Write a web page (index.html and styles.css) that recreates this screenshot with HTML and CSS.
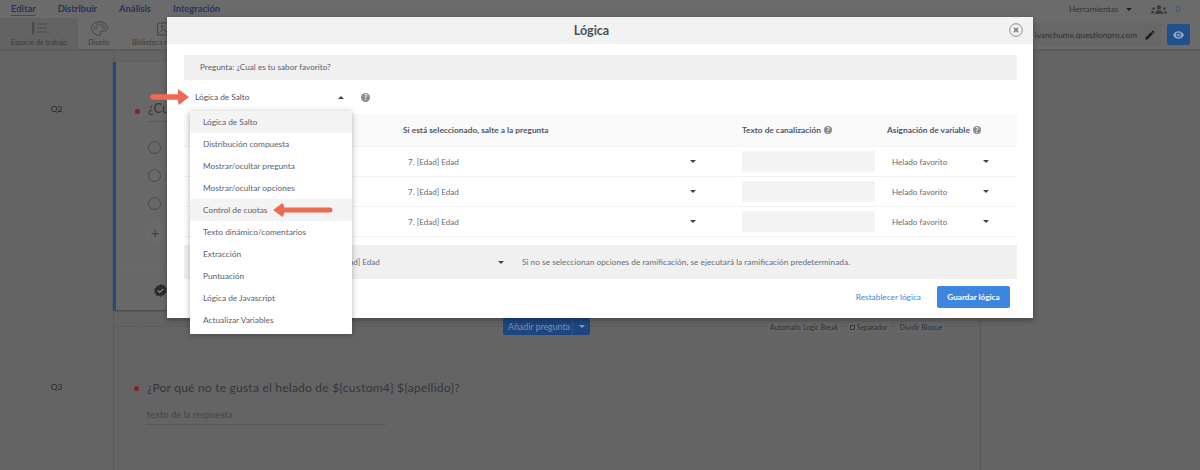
FILE: index.html
```html
<!DOCTYPE html>
<html lang="es">
<head>
<meta charset="utf-8">
<title>Lógica</title>
<link rel="stylesheet" href="styles.css">
</head>
<body>
<div class="page">
  <header class="nav">
    <a class="nav-link nav-active">Editar</a>
    <a class="nav-link">Distribuir</a>
    <a class="nav-link">Análisis</a>
    <a class="nav-link">Integración</a>
    <div class="nav-right">
      <span class="tools">Herramientas</span><span class="caret caret-dark"></span>
      <svg class="users" width="16" height="9" viewBox="0 0 16 9"><g fill="#3c3c3c"><circle cx="8" cy="2.400" r="2.200"/><path d="M4 9c0-2.600 1.600-3.800 4-3.800S12 6.400 12 9z"/><circle cx="2.600" cy="3.600" r="1.400"/><circle cx="13.400" cy="3.600" r="1.400"/><path d="M0 8.600c0-2 1-2.900 2.600-2.900L3.400 8.600zM16 8.600c0-2-1-2.900-2.600-2.900L12.600 8.600z"/></g></svg>
      <span class="count">0</span>
    </div>
  </header>
  <div class="toolbar">
    <div class="tool tool-active">
      <svg width="16" height="14" viewBox="0 0 16 14"><path d="M1 0h2.400v10L2.200 13.500 1 10z" fill="#4a4a4a"/><path d="M6 2h10M6 6h10M6 10h10" stroke="#4a4a4a" stroke-width="1"/></svg>
      <span>Espacio de trabajo</span>
    </div>
    <div class="tool tool-design">
      <svg width="17" height="15" viewBox="0 0 17 15"><path d="M8.500.7C4 .7.700 3.600.700 7.400c0 3.800 3.300 6.900 7.600 6.900 1.400 0 1.800-1 1.300-2-.6-1.200.2-2.200 1.500-2.200h2.300c1.900 0 2.900-1.200 2.900-2.900C16.300 3.300 12.800.7 8.500.7z" fill="none" stroke="#464646"/><circle cx="4.500" cy="7" r="1.200" fill="none" stroke="#464646" stroke-width=".7"/><circle cx="6.500" cy="3.800" r="1.200" fill="none" stroke="#464646" stroke-width=".7"/><circle cx="10.500" cy="3.800" r="1.200" fill="none" stroke="#464646" stroke-width=".7"/><circle cx="13" cy="6.500" r="1.200" fill="none" stroke="#464646" stroke-width=".7"/></svg>
      <span>Diseño</span>
    </div>
    <div class="tool tool-lib">
      <svg width="16" height="14" viewBox="0 0 16 14"><rect x=".5" y="1" width="15" height="12" fill="none" stroke="#464646"/><path d="M2 11l4-4 3 2.500 2-1.500 3 3" fill="none" stroke="#464646"/><circle cx="5" cy="4.500" r="1.200" fill="#464646"/></svg>
      <span>Biblioteca multimedia</span>
    </div>
    <div class="account">
      <span class="account-name">ivanchumx.questionpro.com</span>
      <svg width="12" height="12" viewBox="0 0 24 24"><path fill="#1c1c1c" d="M3 17.250V21h3.750L17.810 9.940l-3.750-3.750L3 17.250zM20.710 7.040a1 1 0 0 0 0-1.410l-2.340-2.340a1 1 0 0 0-1.410 0l-1.830 1.830 3.750 3.750 1.830-1.830z"/></svg>
    </div>
    <div class="eye-btn">
      <svg width="11" height="8" viewBox="0 0 24 16"><path fill="#8fa6c4" d="M12 0C6.500 0 2 3.300 0 8c2 4.700 6.500 8 12 8s10-3.300 12-8c-2-4.700-6.500-8-12-8zm0 13.300A5.300 5.300 0 1 1 12 2.700a5.300 5.300 0 0 1 0 10.600zM12 5a3 3 0 1 0 0 6 3 3 0 0 0 0-6z"/></svg>
    </div>
  </div>
  <main class="workspace">
    <section class="block block-q2">
      <div class="q-label">Q2</div>
      <div class="q-card q-card-active">
        <div class="q-title q-title-q2"><span class="star"></span><span class="q-text q-underlined">¿Cual es tu sabor favorito?</span></div>
        <div class="radios">
          <span class="radio"></span>
          <span class="radio"></span>
          <span class="radio"></span>
        </div>
        <div class="plus">+</div>
        <div class="card-foot">
          <svg class="badge" width="13" height="13" viewBox="0 0 12 12"><path d="M6 0l1.600 1.100 1.900-.1.700 1.800 1.600 1-.5 1.900.5 1.900-1.600 1-.7 1.800-1.900-.1L6 12l-1.600-1.100-1.900.1-.7-1.800-1.600-1 .5-1.900L.2 4.400l1.600-1 .7-1.800 1.900.1z" fill="#2b2b2b"/><path d="M3.500 6l1.800 1.800L8.700 4.500" fill="none" stroke="#8a8a8a" stroke-width="1.100"/></svg>
        </div>
      </div>
    </section>
    <div class="divider">
      <div class="add-btn"><span class="add-label">Añadir pregunta</span><span class="add-caret"><span class="caret caret-white"></span></span></div>
      <div class="divider-opts">
        <span class="opt">Automatic Logic Break</span>
        <span class="opt"><i class="check"></i> Separador</span>
        <span class="opt">Dividir Bloque</span>
      </div>
    </div>
    <section class="block block-q3">
      <div class="q-label">Q3</div>
      <div class="q-card">
        <div class="q-title"><span class="star"></span><span class="q-text">¿Por qué no te gusta el helado de ${custom4} ${apellido}?</span></div>
        <div class="answer">texto de la respuesta</div>
      </div>
    </section>
  </main>

  <div class="modal">
    <div class="modal-head">
      <span class="modal-title">Lógica</span>
      <svg class="close" width="14" height="14" viewBox="0 0 14 14"><circle cx="7" cy="7" r="6.300" fill="none" stroke="#8f8f8f"/><path d="M4.800 4.800l4.400 4.400M9.200 4.800L4.800 9.200" stroke="#777" stroke-width="1.400"/></svg>
    </div>
    <div class="modal-body">
      <div class="question-bar">Pregunta: ¿Cual es tu sabor favorito?</div>
      <div class="logic-row">
        <div class="logic-select"><span>Lógica de Salto</span><span class="caret caret-up"></span></div>
        <span class="help help-main">?</span>
      </div>
      <div class="logic-table">
        <div class="row row-head">
          <div></div>
          <div class="th">Si está seleccionado, salte a la pregunta</div>
          <div class="th">Texto de canalización <span class="help help-small">?</span></div>
          <div class="th">Asignación de variable <span class="help help-small">?</span></div>
        </div>
        <div class="row">
          <div></div>
          <div class="sel sel-wide"><span>7. [Edad] Edad</span><span class="caret"></span></div>
          <div class="cell-input"><div class="input"></div></div>
          <div class="sel sel-var"><span>Helado favorito</span><span class="caret"></span></div>
        </div>
        <div class="row">
          <div></div>
          <div class="sel sel-wide"><span>7. [Edad] Edad</span><span class="caret"></span></div>
          <div class="cell-input"><div class="input"></div></div>
          <div class="sel sel-var"><span>Helado favorito</span><span class="caret"></span></div>
        </div>
        <div class="row">
          <div></div>
          <div class="sel sel-wide"><span>7. [Edad] Edad</span><span class="caret"></span></div>
          <div class="cell-input"><div class="input"></div></div>
          <div class="sel sel-var"><span>Helado favorito</span><span class="caret"></span></div>
        </div>
      </div>
      <div class="default-bar">
        <div class="sel sel-default"><span>7. [Edad] Edad</span><span class="caret"></span></div>
        <span class="default-note">Si no se seleccionan opciones de ramificación, se ejecutará la ramificación predeterminada.</span>
      </div>
      <div class="modal-foot">
        <a class="reset">Restablecer lógica</a>
        <button class="save" type="button">Guardar lógica</button>
      </div>
    </div>
  </div>

  <ul class="menu">
    <li class="menu-item menu-hover">Lógica de Salto</li>
    <li class="menu-item">Distribución compuesta</li>
    <li class="menu-item">Mostrar/ocultar pregunta</li>
    <li class="menu-item">Mostrar/ocultar opciones</li>
    <li class="menu-item menu-hover">Control de cuotas</li>
    <li class="menu-item">Texto dinámico/comentarios</li>
    <li class="menu-item">Extracción</li>
    <li class="menu-item">Puntuación</li>
    <li class="menu-item">Lógica de Javascript</li>
    <li class="menu-item">Actualizar Variables</li>
  </ul>

  <svg class="arrow arrow-one" width="40" height="18" viewBox="0 0 40 18"><path d="M3 9h28" stroke="#ee6a55" stroke-width="5.500" stroke-linecap="round"/><path d="M28 1L39 9 29 17 28 14V4z" fill="#ee6a55"/></svg>
  <svg class="arrow arrow-two" width="62" height="18" viewBox="0 0 62 18"><path d="M58 9H12" stroke="#ee6a55" stroke-width="5" stroke-linecap="round"/><path d="M10.500 2L1 9l9.500 7 1.500-3V5z" fill="#ee6a55"/></svg>
</div>
</body>
</html>
```
FILE: styles.css
```css
* { box-sizing: border-box; }
html, body { margin: 0; padding: 0; }
body {
  width: 1200px;
  height: 470px;
  overflow: hidden;
  background: #646464;
  font-family: "Lato", "Noto Sans", "Liberation Sans", sans-serif;
  color: #545c6b;
}
.page { position: relative; width: 1200px; height: 470px; overflow: hidden; }

/* page behind the modal, dimmed */
.nav {
  display: flex;
  align-items: center;
  height: 18px;
  padding-left: 11px;
  gap: 22px;
  background: #6b6b6b;
}
.nav-link { font-size: 9.400px; font-weight: 700; color: #25355a; line-height: 12px; }
.nav-active { border-bottom: 1px solid #24528f; }
.nav-right { margin-left: auto; display: flex; align-items: center; padding-right: 20px; }
.tools { font-size: 8.300px; color: #333; }
.nav-right .caret-dark { margin: 0 19px 0 8px; }
.users { margin-right: 8px; }
.count { font-size: 8.300px; color: #24528f; }

.toolbar {
  display: flex;
  height: 33px;
  background: #6b6b6b;
  border-bottom: 2px solid #5c5c5c;
  padding-right: 10px;
}
.tool { display: flex; flex-direction: column; align-items: center; justify-content: center; gap: 2px; font-size: 7px; color: #3c3c3c; height: 31px; white-space: nowrap; }
.tool-active { width: 78px; background: #636363; }
.tool-design { width: 42px; }
.tool-lib { width: 90px; }
.account {
  margin-left: auto;
  display: flex;
  align-items: center;
  gap: 7px;
  height: 23px;
  margin-top: 5px;
  padding: 0 5px 0 0;
  background: #676767;
  font-size: 8.300px;
  color: #2f2f2f;
}
.eye-btn {
  display: flex; align-items: center; justify-content: center;
  width: 23px; height: 21px; margin: 6px 0 0 6px;
  background: #22508f; border-radius: 2px;
}

.workspace {
  width: 981px;
  height: 419px;
  border-right: 1px solid #5a5a5a;
  background: linear-gradient(#5a5a5a, #5a5a5a) 113px 0 / 1px 100% no-repeat;
}
.block { display: grid; grid-template-columns: 113px 867px; }
.q-label { font-size: 8.300px; color: #262626; text-align: center; }
.block-q2 { padding-top: 11px; }
.block-q2 .q-label { padding-top: 42px; }
.block-q2 .q-card { height: 248px; border-left: 3px solid #234a80; background: #686868; box-shadow: 0 1px 2px rgba(0, 0, 0, .3); }
.q-title { display: flex; align-items: center; padding-left: 21px; }
.q-title-q2 { padding: 38px 0 0 19px; }
.star { width: 5px; height: 5px; border-radius: 50%; background: #8c2020; margin-right: 8px; flex: none; }
.q-text { font-size: 12px; letter-spacing: .23px; line-height: 18px; color: #33363d; white-space: nowrap; }
.q-title-q2 .q-text { font-size: 12.600px; }
.q-underlined { border-bottom: 1px solid #595959; padding-bottom: 3px; }
.radios { display: flex; flex-direction: column; gap: 15px; padding: 19px 0 0 32px; }
.radio { width: 13px; height: 13px; border: 1px solid #4a4a4a; border-radius: 50%; display: block; }
.plus { display: flex; align-items: center; justify-content: center; width: 20px; height: 20px; margin: 12px 0 0 29px; background: #6a6a6a; font-size: 15px; color: #454545; }
.card-foot { margin-top: 28px; padding: 13px 0 0 38px; border-top: 1px solid #6c6c6c; }
.badge { display: block; }

.divider {
  display: flex;
  align-items: center;
  height: 17px;
  margin: 8px 0 0 114px;
  background: repeating-linear-gradient(90deg, #4e4e4e 0 1px, transparent 1px 3px) center / 100% 1px no-repeat;
}
.add-btn {
  display: flex;
  align-items: center;
  height: 17px;
  margin-left: 389px;
  background: #1d4680;
  border-radius: 2px;
  color: #7d8ea8;
  font-size: 8.800px;
}
.add-label { padding-left: 5px; width: 69px; white-space: nowrap; }
.add-caret { width: 18px; height: 100%; border-left: 1px solid #2a5290; display: flex; align-items: center; justify-content: center; }
.divider-opts { display: flex; gap: 8px; margin-left: 178px; }
.opt { background: #676767; padding: 1px 2px; font-size: 6.900px; color: #303030; white-space: nowrap; }
.check { display: inline-block; width: 5px; height: 5px; border: 1px solid #3a3a3a; }
.block-q3 { padding-top: 44px; }
.block-q3 .q-label { padding-top: 3px; }
.answer {
  margin: 9px 0 0 33px;
  width: 240px;
  height: 19px;
  padding: 3px 0 0 1px;
  font-size: 9.400px;
  color: #444;
  border-bottom: 1px solid #585858;
}

/* modal */
.modal {
  position: absolute;
  left: 167px;
  top: 17px;
  width: 866px;
  height: 301px;
  background: #fff;
  box-shadow: 0 2px 6px rgba(0, 0, 0, .35);
}
.modal-head {
  position: relative;
  display: flex;
  align-items: center;
  justify-content: center;
  height: 27px;
  padding-right: 17px;
  background: #f2f2f2;
}
.modal-title { font-size: 12.500px; font-weight: 700; color: #4a5160; }
.close { position: absolute; right: 10px; top: 6px; }
.modal-body { padding: 11px 16px 0 17px; }
.question-bar {
  height: 25px;
  background: #f0f0f0;
  padding-left: 16px;
  line-height: 25px;
  font-size: 8.200px;
  color: #5a6170;
}
.logic-row { display: flex; align-items: center; height: 34px; padding-left: 11px; }
.logic-select { display: flex; align-items: center; justify-content: space-between; width: 149px; font-size: 8.300px; color: #4f5665; }
.help {
  display: inline-flex; align-items: center; justify-content: center;
  border-radius: 50%; background: #8c8c8c; color: #fff; font-weight: 700;
}
.help-main { width: 9px; height: 9px; font-size: 7px; margin-left: 17px; }
.help-small { width: 8px; height: 8px; font-size: 7px; margin-left: 1px; }

.row { display: grid; grid-template-columns: 219px 339px 145px 130px; border-bottom: 1px solid #f3f3f3; height: 30px; align-items: center; }
.row-head { height: 33px; background: #fafafa; }
.th { font-size: 8.350px; font-weight: 700; color: #4f5665; white-space: nowrap; }
.sel { display: flex; align-items: center; justify-content: space-between; font-size: 8.100px; color: #666e7c; }
.sel-wide { padding: 0 46px 0 5px; }
.sel-var { padding: 0 28px 0 5px; }
.input { width: 133px; height: 21px; background: #f4f4f4; }

.caret { display: inline-block; width: 0; height: 0; border-left: 3px solid transparent; border-right: 3px solid transparent; border-top: 3px solid #444; }
.caret-up { border-top: 0; border-bottom: 3px solid #444; }
.caret-dark { border-top-color: #222; }
.caret-white { border-top-color: #8a9ab0; }

.default-bar {
  display: flex;
  align-items: center;
  height: 34px;
  margin-top: 8px;
  background: #f0f0f0;
}
.sel-default { width: 320px; padding-left: 145px; }
.default-note { margin-left: 18px; font-size: 8.300px; color: #666e7c; white-space: nowrap; }
.modal-foot { display: flex; align-items: center; justify-content: flex-end; gap: 16px; height: 22px; margin-top: 7px; padding-right: 7px; }
.reset { font-size: 8.300px; color: #3f86de; white-space: nowrap; }
.save {
  width: 73px; height: 22px; padding: 0;
  border: 0; border-radius: 2px;
  background: #3d86e0; color: #fff;
  font: 700 8.200px "Lato", "Noto Sans", sans-serif;
}

/* dropdown */
.menu {
  position: absolute;
  left: 190px;
  top: 111px;
  width: 162px;
  margin: 0;
  padding: 0 0 3px;
  list-style: none;
  background: #fff;
  box-shadow: 0 1px 6px rgba(0, 0, 0, .3);
}
.menu-item { height: 22px; line-height: 22px; padding-left: 13px; font-size: 8.300px; color: #5a6170; white-space: nowrap; }
.menu-hover { background: #f4f4f4; }

.arrow { position: absolute; }
.arrow-one { left: 150px; top: 88px; }
.arrow-two { left: 272px; top: 201px; }
```
